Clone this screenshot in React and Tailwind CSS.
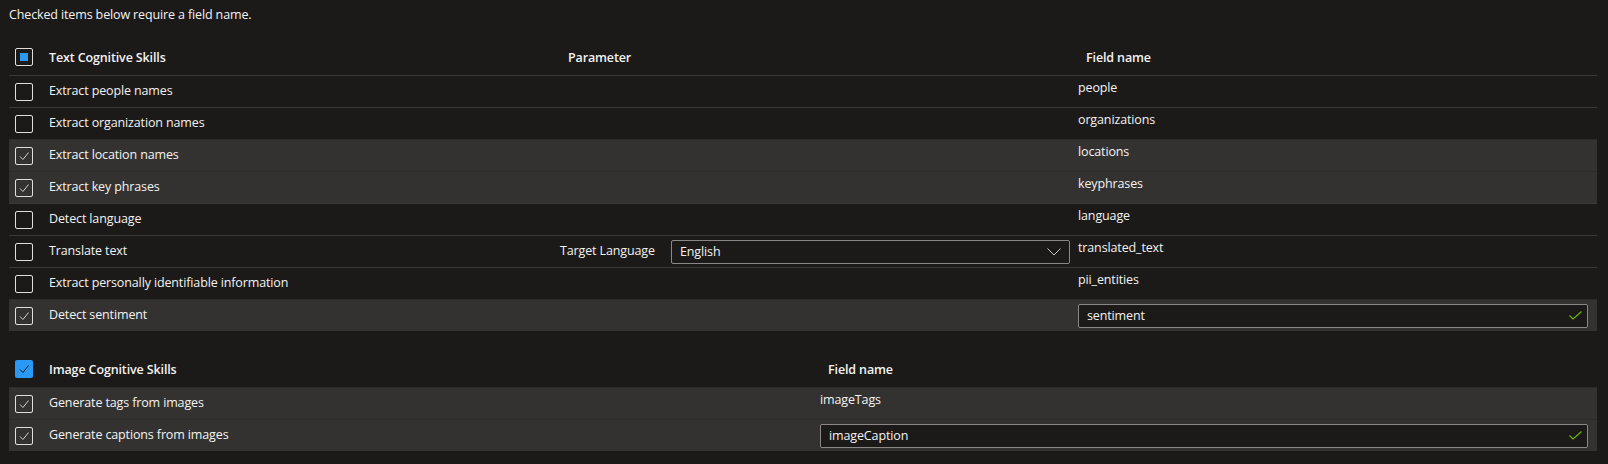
import React from "react";

const textRows = [
  { label: "Extract people names", checked: false, field: "people" },
  { label: "Extract organization names", checked: false, field: "organizations" },
  { label: "Extract location names", checked: true, field: "locations" },
  { label: "Extract key phrases", checked: true, field: "keyphrases" },
  { label: "Detect language", checked: false, field: "language" },
  { label: "Translate text", checked: false, field: "translated_text", param: true },
  { label: "Extract personally identifiable information", checked: false, field: "pii_entities" },
  { label: "Detect sentiment", checked: true, field: "sentiment", input: true },
];

const imageRows = [
  { label: "Generate tags from images", checked: true, field: "imageTags" },
  { label: "Generate captions from images", checked: true, field: "imageCaption", input: true },
];

function CheckMark({ color }) {
  return (
    <svg width="18" height="18" viewBox="0 0 18 18" className="block">
      <polyline points="5,9.5 8,12.5 13.5,5.5" fill="none" stroke={color} strokeWidth="1" />
    </svg>
  );
}

function Checkbox({ state }) {
  if (state === "filled") {
    return (
      <div className="w-[18px] h-[18px] shrink-0 rounded-[2px] bg-[#2899f5]">
        <CheckMark color="#1b1a19" />
      </div>
    );
  }
  if (state === "indeterminate") {
    return (
      <div className="w-[18px] h-[18px] shrink-0 rounded-[2px] border border-[#e1dfdd] flex items-center justify-center">
        <div className="w-[8px] h-[8px] bg-[#2899f5]" />
      </div>
    );
  }
  return (
    <div className="w-[18px] h-[18px] shrink-0 rounded-[2px] border border-[#e1dfdd] relative">
      {state === "checked" && (
        <div className="absolute -left-px -top-px">
          <CheckMark color="#d2d0ce" />
        </div>
      )}
    </div>
  );
}

function FieldInput({ value, width }) {
  return (
    <div className={`${width} h-6 border border-[#8a8886] rounded-[2px] bg-[#1b1a19] flex items-center justify-between pl-2 pr-[5px]`}>
      <span className="leading-5">{value}</span>
      <svg width="13" height="9" viewBox="0 0 13 9" className="block">
        <polyline points="0.5,4.5 4,8 12.5,0.5" fill="none" stroke="#6bb700" strokeWidth="1.1" />
      </svg>
    </div>
  );
}

function Dropdown() {
  return (
    <div className="w-[399px] h-6 border border-[#8a8886] rounded-[2px] bg-[#1b1a19] flex items-center justify-between pl-2 pr-[8px]">
      <span className="leading-5">English</span>
      <svg width="14" height="8" viewBox="0 0 14 8" className="block">
        <polyline points="0.5,0.5 7,7 13.5,0.5" fill="none" stroke="#c8c6c4" strokeWidth="1" />
      </svg>
    </div>
  );
}

function Row({ row, col1, col2, showParamCol, inputWidth }) {
  const rowCls = row.checked
    ? "bg-[#333231] border-t border-[#2c2b2a]"
    : "border-t border-[#3b3a39]";
  return (
    <div className={`flex h-8 ${rowCls}`}>
      <div className={`${col1} shrink-0 flex items-center pl-[6px] gap-4`}>
        <Checkbox state={row.checked ? "checked" : "unchecked"} />
        <span className="leading-5 -mt-[2px]">{row.label}</span>
      </div>
      {showParamCol && (
        <div className={`${col2} shrink-0 flex items-center pl-2`}>
          {row.param && (
            <>
              <span className="w-[111px] shrink-0 leading-5 -mt-[2px]">Target Language</span>
              <Dropdown />
            </>
          )}
        </div>
      )}
      <div className="flex-1 pl-2 flex">
        {row.input ? (
          <div className="flex items-center">
            <FieldInput value={row.field} width={inputWidth} />
          </div>
        ) : (
          <span className="leading-5 pt-[2px]">{row.field}</span>
        )}
      </div>
    </div>
  );
}

export default function App() {
  return (
    <div className="min-h-screen w-full bg-[#1b1a19] text-[#f3f2f1] font-['Open_Sans',sans-serif] text-[12.5px] tracking-[-0.13px] overflow-hidden">
      <div className="pt-[5px] pl-[9px] leading-5">Checked items below require a field name.</div>

      <div className="ml-[9px] w-[1588px] mt-[14px]">
        <div className="flex h-9 font-semibold">
          <div className="w-[543px] shrink-0 flex items-center pl-[6px] gap-4">
            <Checkbox state="indeterminate" />
            <span className="leading-5 mt-[2px]">Text Cognitive Skills</span>
          </div>
          <div className="w-[518px] shrink-0 flex items-center pl-4">
            <span className="leading-5 mt-[2px]">Parameter</span>
          </div>
          <div className="flex-1 flex items-center pl-4">
            <span className="leading-5 mt-[2px]">Field name</span>
          </div>
        </div>
        {textRows.map((r) => (
          <Row key={r.label} row={r} col1="w-[543px]" col2="w-[518px]" showParamCol inputWidth="w-[510px]" />
        ))}
      </div>

      <div className="ml-[9px] w-[1588px] mt-[20px]">
        <div className="flex h-9 font-semibold">
          <div className="w-[803px] shrink-0 flex items-center pl-[6px] gap-4">
            <Checkbox state="filled" />
            <span className="leading-5 mt-[2px]">Image Cognitive Skills</span>
          </div>
          <div className="flex-1 flex items-center pl-4">
            <span className="leading-5 mt-[2px]">Field name</span>
          </div>
        </div>
        {imageRows.map((r) => (
          <Row key={r.label} row={r} col1="w-[803px]" inputWidth="w-[768px]" />
        ))}
      </div>
    </div>
  );
}
